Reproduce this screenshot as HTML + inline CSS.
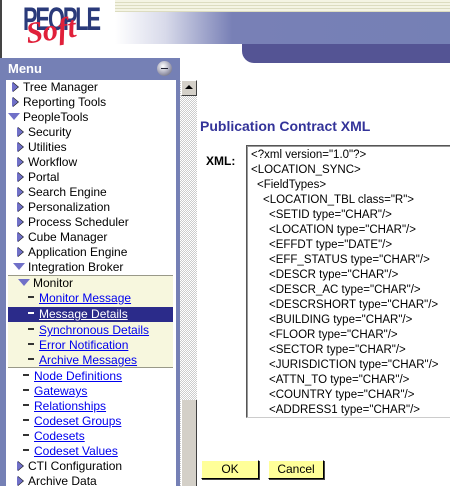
<!DOCTYPE html>
<html><head><style>
*{margin:0;padding:0;box-sizing:border-box}
body{width:450px;height:486px;overflow:hidden;background:#fff;position:relative;font-family:"Liberation Sans",Arial,sans-serif;font-size:12px;color:#000}
.a{position:absolute}
.r{position:absolute;height:15px;line-height:15px;white-space:nowrap;font-size:12px}
.r a{color:#0000ee;text-decoration:underline}
.tri{display:inline-block;width:0;height:0;border-top:5px solid transparent;border-bottom:5px solid transparent;border-left:6px solid #7070c8;vertical-align:-1px;margin-right:5px;filter:drop-shadow(1px 0 0 #222)}
.dn{display:inline-block;width:0;height:0;border-left:6px solid transparent;border-right:6px solid transparent;border-top:7px solid #7070c8;vertical-align:1px;margin-right:3px}
.dash{display:inline-block;width:6px;height:2px;background:#333;vertical-align:4px;margin-right:5px}
.x{position:absolute;left:4px;font-size:11.5px;white-space:nowrap;line-height:15px}
.btn{position:absolute;top:460px;height:19px;background:#ffff99;border:1px solid;border-color:#fff #000 #000 #fff;box-shadow:1px 1px 0 #444;text-align:center;line-height:17px;font-size:12px}
</style></head><body>
<div class="a" style="left:0;top:0;width:2px;height:58px;background:#444"></div>
<div class="a" style="left:115px;top:0;width:335px;height:12px;background:repeating-linear-gradient(#f4f4e4 0 2px,#dcdcc0 2px 3px)"></div>
<div class="a" style="left:115px;top:12px;width:335px;height:32px;background:linear-gradient(90deg,#fff 0,#d8daea 15%,#7880b6 35%,#7580b5 100%)"></div>
<div class="a" style="left:242px;top:44px;width:208px;height:19px;background:#545494;border-bottom-left-radius:12px"></div>
<div class="a" style="left:23px;top:1px;font:bold 32px 'Liberation Sans',sans-serif;color:#2a3a7a;letter-spacing:-3px;transform:scaleX(.68);transform-origin:left">PEOPLE</div>
<div class="a" style="left:26px;top:14px;font:italic bold 30px 'Liberation Serif',serif;color:#e0203a;transform:rotate(-8deg)">Soft</div>
<div class="a" style="left:0;top:58px;width:180px;height:428px;background:#7580b5"></div>
<div class="a" style="left:8px;top:61px;color:#fff;font-weight:bold;font-size:13px">Menu</div>
<div class="a" style="left:157px;top:61px;width:15px;height:15px;border-radius:50%;background:radial-gradient(circle at 40% 35%,#fff,#aab 50%,#556 100%)"><div style="margin:7px 4px;height:1px;background:#223"></div></div>
<div class="a" style="left:6px;top:80px;width:170px;height:406px;background:#fff"></div>
<div class="a" style="left:8px;top:275px;width:165px;height:93px;background:#f7f7de;border-top:1px solid #998;border-bottom:1px solid #998"></div>
<div class="a" style="left:8px;top:307px;width:165px;height:15px;background:#2b2b8a"></div>
<div class="r" style="left:12px;top:80px"><span class="tri"></span>Tree Manager</div>
<div class="r" style="left:12px;top:95px"><span class="tri"></span>Reporting Tools</div>
<div class="r" style="left:8px;top:110px"><span class="dn"></span>PeopleTools</div>
<div class="r" style="left:17px;top:125px"><span class="tri"></span>Security</div>
<div class="r" style="left:17px;top:140px"><span class="tri"></span>Utilities</div>
<div class="r" style="left:17px;top:155px"><span class="tri"></span>Workflow</div>
<div class="r" style="left:17px;top:170px"><span class="tri"></span>Portal</div>
<div class="r" style="left:17px;top:185px"><span class="tri"></span>Search Engine</div>
<div class="r" style="left:17px;top:200px"><span class="tri"></span>Personalization</div>
<div class="r" style="left:17px;top:215px"><span class="tri"></span>Process Scheduler</div>
<div class="r" style="left:17px;top:230px"><span class="tri"></span>Cube Manager</div>
<div class="r" style="left:17px;top:245px"><span class="tri"></span>Application Engine</div>
<div class="r" style="left:13px;top:260px"><span class="dn"></span>Integration Broker</div>
<div class="r" style="left:18px;top:276px"><span class="dn"></span>Monitor</div>
<div class="r" style="left:28px;top:291px"><span class="dash"></span><a>Monitor Message</a></div>
<div class="r" style="left:28px;top:307px"><span class="dash" style="background:#fff"></span><a style="color:#fff">Message Details</a></div>
<div class="r" style="left:28px;top:323px"><span class="dash"></span><a>Synchronous Details</a></div>
<div class="r" style="left:28px;top:338px"><span class="dash"></span><a>Error Notification</a></div>
<div class="r" style="left:28px;top:353px"><span class="dash"></span><a>Archive Messages</a></div>
<div class="r" style="left:23px;top:369px"><span class="dash"></span><a>Node Definitions</a></div>
<div class="r" style="left:23px;top:384px"><span class="dash"></span><a>Gateways</a></div>
<div class="r" style="left:23px;top:399px"><span class="dash"></span><a>Relationships</a></div>
<div class="r" style="left:23px;top:414px"><span class="dash"></span><a>Codeset Groups</a></div>
<div class="r" style="left:23px;top:429px"><span class="dash"></span><a>Codesets</a></div>
<div class="r" style="left:23px;top:444px"><span class="dash"></span><a>Codeset Values</a></div>
<div class="r" style="left:17px;top:459px"><span class="tri"></span>CTI Configuration</div>
<div class="r" style="left:17px;top:474px"><span class="tri"></span>Archive Data</div>
<div class="a" style="left:180px;top:80px;width:17px;height:406px;background:repeating-conic-gradient(#ccc 0 25%,#fff 0 50%) 0 0/2px 2px"></div>
<div class="a" style="left:181px;top:80px;width:16px;height:16px;background:#d4d0c8;border:1px solid;border-color:#fff #404040 #404040 #fff"><div style="margin:4px auto 0;width:0;height:0;border-left:4px solid transparent;border-right:4px solid transparent;border-bottom:4px solid #000"></div></div>
<div class="a" style="left:181px;top:400px;width:16px;height:86px;background:#d4d0c8;border-left:1px solid #fff;border-right:1px solid #404040"></div>
<div class="a" style="left:200px;top:118px;font-weight:bold;font-size:14px;color:#333399">Publication Contract XML</div>
<div class="a" style="left:206px;top:154px;font-weight:bold;font-size:12px">XML:</div>
<div class="a" style="left:246px;top:145px;width:210px;height:273px;border:1px solid;border-color:#555 #fff #ccc #555;box-shadow:inset 1px 1px 0 #999;overflow:hidden">
<div class="x" style="top:2px">&lt;?xml version="1.0"?&gt;</div>
<div class="x" style="top:17px">&lt;LOCATION_SYNC&gt;</div>
<div class="x" style="top:32px;left:10px">&lt;FieldTypes&gt;</div>
<div class="x" style="top:47px;left:16px">&lt;LOCATION_TBL class="R"&gt;</div>
<div class="x" style="top:62px;left:22px">&lt;SETID type="CHAR"/&gt;</div>
<div class="x" style="top:77px;left:22px">&lt;LOCATION type="CHAR"/&gt;</div>
<div class="x" style="top:92px;left:22px">&lt;EFFDT type="DATE"/&gt;</div>
<div class="x" style="top:107px;left:22px">&lt;EFF_STATUS type="CHAR"/&gt;</div>
<div class="x" style="top:122px;left:22px">&lt;DESCR type="CHAR"/&gt;</div>
<div class="x" style="top:137px;left:22px">&lt;DESCR_AC type="CHAR"/&gt;</div>
<div class="x" style="top:152px;left:22px">&lt;DESCRSHORT type="CHAR"/&gt;</div>
<div class="x" style="top:167px;left:22px">&lt;BUILDING type="CHAR"/&gt;</div>
<div class="x" style="top:182px;left:22px">&lt;FLOOR type="CHAR"/&gt;</div>
<div class="x" style="top:197px;left:22px">&lt;SECTOR type="CHAR"/&gt;</div>
<div class="x" style="top:212px;left:22px">&lt;JURISDICTION type="CHAR"/&gt;</div>
<div class="x" style="top:227px;left:22px">&lt;ATTN_TO type="CHAR"/&gt;</div>
<div class="x" style="top:242px;left:22px">&lt;COUNTRY type="CHAR"/&gt;</div>
<div class="x" style="top:257px;left:22px">&lt;ADDRESS1 type="CHAR"/&gt;</div>
</div>
<div class="btn" style="left:201px;width:58px">OK</div>
<div class="btn" style="left:268px;width:56px">Cancel</div>
</body></html>
